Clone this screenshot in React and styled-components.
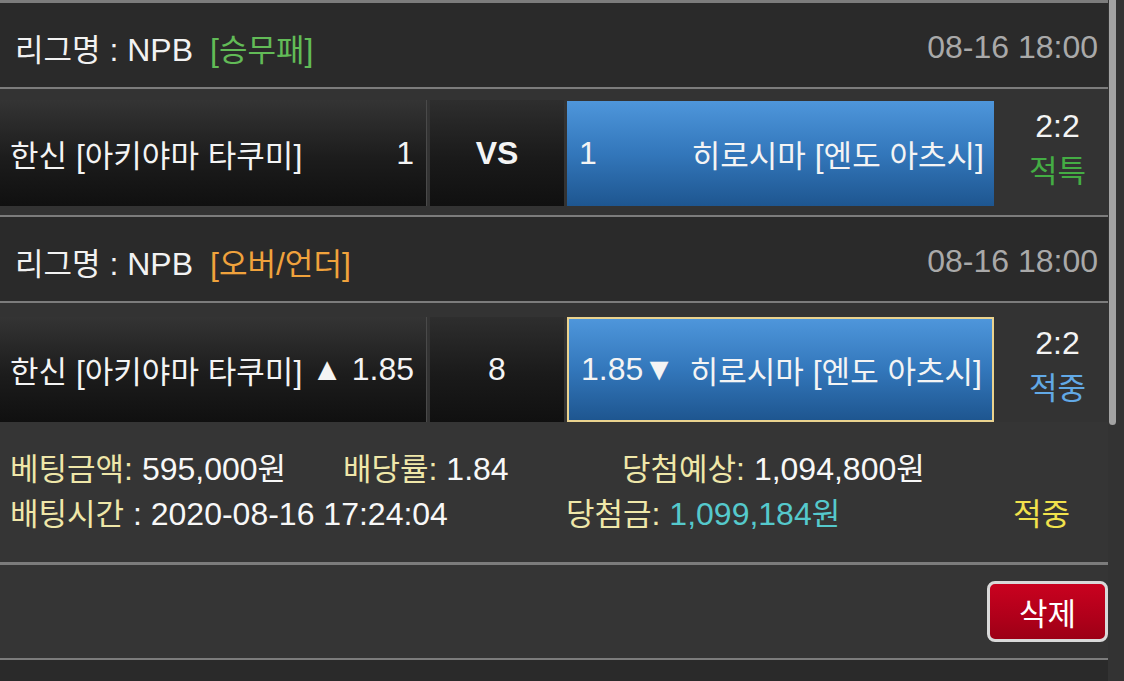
import React from 'react';
import styled, { createGlobalStyle } from 'styled-components';

const GlobalStyle = createGlobalStyle`
  html, body {
    margin: 0;
    padding: 0;
    background: #333;
  }
  body {
    font-family: "Liberation Sans", "Noto Sans CJK KR", sans-serif;
    color: #f4f4f4;
  }
`;

const Page = styled.div`
  position: relative;
  width: 1124px;
  height: 681px;
  overflow: hidden;
  background: #333;
  font-size: 32px;
`;

const Content = styled.div`
  width: 1108px;
  border-top: 3px solid #7c7c7c;
`;

// hangul glyphs are a bit narrower in the original font
const Ko = styled.span`
  font-size: 31px;
`;

const Header = styled.div`
  display: flex;
  align-items: center;
  justify-content: space-between;
  box-sizing: border-box;
  height: 86px;
  padding: 5px 10px 0 15px;
  background: #2a2a2a;
  border-bottom: 2px solid #7c7c7c;
`;

const League = styled.div`
  color: #f2f2f2;
`;

const Tag = styled.span`
  margin-left: 17px;
  color: ${(p) => p.$color};
`;

const Time = styled.div`
  color: #a9a9a9;
`;

const Match = styled.div`
  display: flex;
  gap: 3px;
  padding: ${(p) => (p.$last ? '14px 0 0' : '11px 0 9px')};
  background: #333;
  border-bottom: ${(p) => (p.$last ? 'none' : '2px solid #7c7c7c')};
`;

const Side = styled.div`
  display: flex;
  align-items: center;
  justify-content: space-between;
  box-sizing: border-box;
  width: 427px;
  height: ${(p) => (p.$short ? 105 : 106)}px;
  padding: 0 12px 0 10px;
  white-space: nowrap;
  background: linear-gradient(to bottom, #343434 0%, #1c1c1c 55%, #101010 100%);
  border-right: 1px solid #4a4a4a;
`;

const Middle = styled.div`
  display: flex;
  align-items: center;
  justify-content: center;
  width: 134px;
  background: linear-gradient(to bottom, #2e2e2e 0%, #1a1a1a 55%, #101010 100%);
  font-weight: ${(p) => (p.$bold ? 700 : 400)};
`;

const Picked = styled.div`
  display: flex;
  align-items: center;
  justify-content: space-between;
  box-sizing: border-box;
  width: 427px;
  padding: 0 10px 0 12px;
  white-space: nowrap;
  background: linear-gradient(to bottom, #4e96db 0%, #3377bb 50%, #1e5690 100%);
  border: ${(p) => (p.$outlined ? '2px solid #ead38f' : 'none')};
  margin-top: ${(p) => (p.$outlined ? 0 : 1)}px;
`;

const Score = styled.div`
  display: flex;
  flex-direction: column;
  align-items: center;
  justify-content: center;
  flex: 1;
  padding: 0 0 8px 10px;
  line-height: 45px;
`;

const Result = styled.div`
  color: ${(p) => p.$color};
`;

const Info = styled.div`
  padding: 25px 0 25px 10px;
  background: #353535;
  border-bottom: 3px solid #7c7c7c;
  line-height: 45px;
`;

const InfoLine = styled.div`
  display: flex;
`;

const Field = styled.div`
  width: ${(p) => (p.$w ? `${p.$w}px` : 'auto')};
  white-space: nowrap;
`;

const Label = styled.span`
  color: #efe7a9;
`;

const Value = styled.span`
  color: ${(p) => p.$color || '#f8f8f8'};
`;

const Actions = styled.div`
  display: flex;
  justify-content: flex-end;
  box-sizing: border-box;
  height: 95px;
  padding-top: 16px;
  background: #353535;
  border-bottom: 2px solid #7c7c7c;
`;

const DeleteButton = styled.button`
  width: 121px;
  height: 61px;
  padding: 0;
  border: 3px solid #d9d9d9;
  border-radius: 8px;
  background: linear-gradient(to bottom, #c9021f 0%, #b0001a 60%, #9c0016 100%);
  color: #fff;
  font-family: inherit;
  font-size: 32px;
`;

const Footer = styled.div`
  height: 30px;
  background: #2a2a2a;
`;

const Scrollbar = styled.div`
  position: absolute;
  top: 0;
  left: 1109px;
  width: 7px;
  height: 425px;
  border-radius: 0 0 4px 4px;
  background: #a3a3a3;
`;

export default function App() {
  return (
    <Page>
      <GlobalStyle />
      <Content>
        <Header>
          <League>
            <Ko>리그명</Ko> : NPB
            <Tag $color="#62bb57">
              [<Ko>승무패</Ko>]
            </Tag>
          </League>
          <Time>08-16 18:00</Time>
        </Header>
        <Match>
          <Side>
            <span>
              <Ko>한신</Ko> [<Ko>아키야마</Ko> <Ko>타쿠미</Ko>]
            </span>
            <span>1</span>
          </Side>
          <Middle $bold>VS</Middle>
          <Picked>
            <span>1</span>
            <span>
              <Ko>히로시마</Ko> [<Ko>엔도</Ko> <Ko>아츠시</Ko>]
            </span>
          </Picked>
          <Score>
            <div>2:2</div>
            <Result $color="#44ad44">
              <Ko>적특</Ko>
            </Result>
          </Score>
        </Match>

        <Header>
          <League>
            <Ko>리그명</Ko> : NPB
            <Tag $color="#f0a23c">
              [<Ko>오버</Ko>/<Ko>언더</Ko>]
            </Tag>
          </League>
          <Time>08-16 18:00</Time>
        </Header>
        <Match $last>
          <Side $short>
            <span>
              <Ko>한신</Ko> [<Ko>아키야마</Ko> <Ko>타쿠미</Ko>]
            </span>
            <span>▲ 1.85</span>
          </Side>
          <Middle>8</Middle>
          <Picked $outlined>
            <span>1.85▼</span>
            <span>
              <Ko>히로시마</Ko> [<Ko>엔도</Ko> <Ko>아츠시</Ko>]
            </span>
          </Picked>
          <Score>
            <div>2:2</div>
            <Result $color="#62a9e6">
              <Ko>적중</Ko>
            </Result>
          </Score>
        </Match>

        <Info>
          <InfoLine>
            <Field $w={333}>
              <Label>
                <Ko>베팅금액</Ko>:
              </Label>{' '}
              <Value>
                595,000<Ko>원</Ko>
              </Value>
            </Field>
            <Field $w={279}>
              <Label>
                <Ko>배당률</Ko>:
              </Label>{' '}
              <Value>1.84</Value>
            </Field>
            <Field>
              <Label>
                <Ko>당첨예상</Ko>:
              </Label>{' '}
              <Value>
                1,094,800<Ko>원</Ko>
              </Value>
            </Field>
          </InfoLine>
          <InfoLine>
            <Field $w={556}>
              <Label>
                <Ko>배팅시간</Ko>
              </Label>
              <Value> : 2020-08-16 17:24:04</Value>
            </Field>
            <Field $w={447}>
              <Label>
                <Ko>당첨금</Ko>:
              </Label>{' '}
              <Value $color="#55c9cc">
                1,099,184<Ko>원</Ko>
              </Value>
            </Field>
            <Field>
              <Value $color="#f1e24c">
                <Ko>적중</Ko>
              </Value>
            </Field>
          </InfoLine>
        </Info>

        <Actions>
          <DeleteButton>
            <Ko>삭제</Ko>
          </DeleteButton>
        </Actions>
        <Footer />
      </Content>
      <Scrollbar />
    </Page>
  );
}
